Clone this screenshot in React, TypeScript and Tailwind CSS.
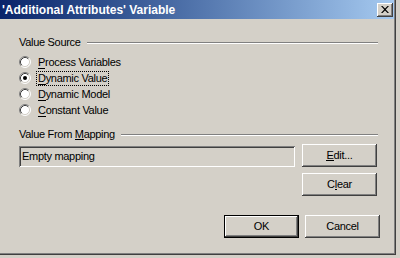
const raised =
  "shadow-[inset_-1px_-1px_#404040,inset_1px_1px_#ffffff,inset_-2px_-2px_#808080,inset_2px_2px_#d4d0c8]";

const Radio = ({ label, hotkey, rest, checked, focused }: { label?: string; hotkey: string; rest: string; checked?: boolean; focused?: boolean }) => (
  <div className="flex items-center h-[16px]">
    <svg width="12" height="12" viewBox="0 0 12 12" className="shrink-0">
      <circle cx="6" cy="6" r="5" fill="#ffffff" />
      <path d="M2.11 9.89 A5.5 5.5 0 0 1 9.89 2.11" fill="none" stroke="#808080" strokeWidth="1" />
      <path d="M9.89 2.11 A5.5 5.5 0 0 1 2.11 9.89" fill="none" stroke="#ffffff" strokeWidth="1" />
      <path d="M2.82 9.18 A4.5 4.5 0 0 1 9.18 2.82" fill="none" stroke="#404040" strokeWidth="1" />
      <path d="M9.18 2.82 A4.5 4.5 0 0 1 2.82 9.18" fill="none" stroke="#d4d0c8" strokeWidth="1" />
      {checked && <circle cx="6" cy="6" r="2" fill="#000000" />}
    </svg>
    <span
      className={
        "ml-[6px] px-[1px] leading-[13px] " +
        (focused ? "outline outline-1 outline-dotted outline-black" : "")
      }
    >
      <u className="no-underline border-b border-black">{hotkey}</u>
      {rest}
      {label}
    </span>
  </div>
);

const GroupHeading = ({ before, hotkey, after }: { before: string; hotkey?: string; after?: string }) => (
  <div className="flex items-center h-[13px] mr-[2px]">
    <span className="leading-[13px]">
      {before}
      {hotkey && <span className="border-b border-black leading-[10px] inline-block">{hotkey}</span>}
      {after}
    </span>
    <div className="flex-1 ml-[6px] border-t border-t-[#808080] border-b border-b-white" />
  </div>
);

const Button = ({ children, isDefault }: { children: React.ReactNode; isDefault?: boolean }) => (
  <div
    className={
      "w-[75px] h-[23px] bg-[#d4d0c8] flex items-center justify-center " +
      (isDefault ? "border border-black " : "") +
      raised
    }
  >
    <span className="leading-[13px]">{children}</span>
  </div>
);

export default function App() {
  return (
    <div className="w-[400px] h-[258px] bg-[#d4d0c8] overflow-hidden font-['Liberation_Sans',Arial,sans-serif] text-[11px] tracking-[-0.3px] text-black">
      <div className="w-[396px] h-[255px] flex flex-col shadow-[inset_-1px_-1px_#404040,inset_-2px_-2px_#808080]">
        <div className="h-[19px] mr-[2px] bg-gradient-to-r from-[#0a246a] to-[#a6caf0] flex items-center pl-[2px] pr-[1px]">
          <span className="text-white font-bold text-[12px] tracking-normal leading-[14px] flex-1">
            'Additional Attributes' Variable
          </span>
          <div className={"w-[16px] h-[14px] bg-[#d4d0c8] flex items-center justify-center " + raised}>
            <svg width="8" height="7" viewBox="0 0 8 7">
              <path d="M0 0 L1.5 0 L4 2.6 L6.5 0 L8 0 L4.8 3.5 L8 7 L6.5 7 L4 4.4 L1.5 7 L0 7 L3.2 3.5 Z" fill="#000" />
            </svg>
          </div>
        </div>

        <div className="flex flex-col pl-[19px] w-[380px] pt-[17px]">
          <GroupHeading before="Value Source" />
          <div className="flex flex-col mt-[5px]">
            <Radio hotkey="P" rest="rocess Variables" />
            <Radio hotkey="D" rest="ynamic Value" checked focused />
            <Radio hotkey="D" rest="ynamic Model" />
            <Radio hotkey="C" rest="onstant Value" />
          </div>

          <div className="mt-[10px]">
            <GroupHeading before="Value From " hotkey="M" after="apping" />
          </div>

          <div className="flex mt-[3px] gap-[7px]">
            <div className="w-[276px] h-[21px] mt-[2px] flex items-center pl-[3px] shadow-[inset_1px_1px_#808080,inset_-1px_-1px_#ffffff,inset_2px_2px_#404040,inset_-2px_-2px_#d4d0c8]">
              <span className="leading-[13px]">Empty mapping</span>
            </div>
            <div className="flex flex-col gap-[6px]">
              <Button>
                <span className="border-b border-black leading-[10px] inline-block">E</span>dit...
              </Button>
              <Button>
                C<span className="border-b border-black leading-[10px] inline-block">l</span>ear
              </Button>
            </div>
          </div>

          <div className="flex justify-end gap-[6px] mt-[19px]">
            <Button isDefault>OK</Button>
            <Button>Cancel</Button>
          </div>
        </div>
      </div>
    </div>
  );
}
